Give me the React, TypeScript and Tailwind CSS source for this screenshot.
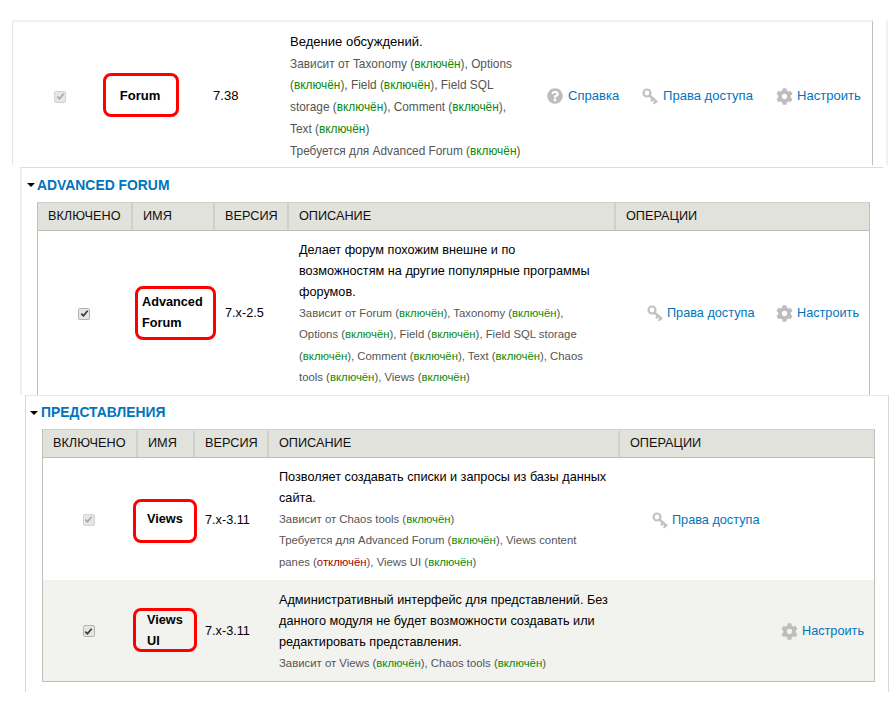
import React from "react";
import { FaCog, FaQuestionCircle } from "react-icons/fa";

const On = () => <span className="text-[#0a8a0a]">включён</span>;
const Off = () => <span className="text-[#a30000]">отключён</span>;

function KeyIcon() {
  return (
    <svg viewBox="0 0 17 17" className="w-[17px] h-[17px] shrink-0" fill="none">
      <circle cx="5" cy="5" r="3.5" stroke="#c2c2c2" strokeWidth="2.2" />
      <path d="M7.4 7.6l7.6 6.6" stroke="#c2c2c2" strokeWidth="2.6" />
      <path d="M11 11l-2 2.4M13.6 13.2l-1.8 2.6" stroke="#c2c2c2" strokeWidth="2.2" />
    </svg>
  );
}

function Check({ disabled }: { disabled?: boolean }) {
  return (
    <span
      className={
        disabled
          ? "flex w-3 h-3 rounded-[2px] border border-[#d2d2d2] bg-[#e6e6e6] items-center justify-center"
          : "flex w-3 h-3 rounded-[2px] border border-[#b4b4b4] bg-[#e4e4e4] items-center justify-center"
      }
    >
      <svg viewBox="0 0 10 10" className="w-[9px] h-[9px]" fill="none">
        <path d="M1.5 5.2l2.3 2.4L8.5 2" stroke={disabled ? "#a8a8a8" : "#333333"} strokeWidth="1.8" />
      </svg>
    </span>
  );
}

function Help() {
  return (
    <a className="flex items-center gap-[5px] text-[#0074bd]">
      <FaQuestionCircle className="w-4 h-4 text-[#bdbdbd] shrink-0" />
      Справка
    </a>
  );
}
function Perm({ wide }: { wide?: boolean }) {
  return (
    <a className={(wide ? "gap-[4px]" : "gap-[3px]") + " flex items-center text-[#0074bd] whitespace-nowrap"}>
      <KeyIcon />
      Права доступа
    </a>
  );
}
function Conf() {
  return (
    <a className="flex items-center gap-[4px] text-[#0074bd]">
      <FaCog className="w-[17px] h-[17px] text-[#bdbdbd] shrink-0" />
      Настроить
    </a>
  );
}

function Legend({ title, cls }: { title: string; cls: string }) {
  return (
    <div className={cls + " flex items-center"}>
      <span className="w-0 h-0 border-x-[4px] border-x-transparent border-t-[4px] border-t-black" />
      <span className="text-[#0074bd] font-bold text-[13.9px]">{title}</span>
    </div>
  );
}

function HeadCell({ label, last }: { label: string; last?: boolean }) {
  return (
    <div className={last ? "pl-[10px] flex items-center" : "pl-[10px] flex items-center border-r-2 border-r-[#cfd0ca]"}>
      {label}
    </div>
  );
}

function Head({ cols }: { cols: string }) {
  return (
    <div className={cols + " h-[28px] bg-[#e1e2dc] border-b border-[#bebfb9] text-[#111]"}>
      <HeadCell label="ВКЛЮЧЕНО" />
      <HeadCell label="ИМЯ" />
      <HeadCell label="ВЕРСИЯ" />
      <HeadCell label="ОПИСАНИЕ" />
      <HeadCell label="ОПЕРАЦИИ" last />
    </div>
  );
}

const cols2 = "grid grid-cols-[95px_82px_74px_327px_1fr]";
const cols3 = "grid grid-cols-[95px_57px_74px_351px_1fr] pt-[1px]";
const sm = "text-[11.35px] text-[#555] leading-[21.1px]";

export default function App() {
  return (
    <div
      className="w-[896px] h-[706px] bg-white overflow-hidden text-black"
      style={{ fontFamily: '"Liberation Sans", Arial, sans-serif' }}
    >
      {/* Forum row */}
      <div className="flex pt-[20px] pl-[12px] text-[13.05px]">
        <div className="w-[861px] h-[145px] border-l border-l-[#e6e6e0] border-t-2 border-t-[#f2f2ee] border-r border-r-[#bebfb9] grid grid-cols-[91px_100px_86px_247px_1fr] items-center">
          <div className="flex justify-end pr-[38px] mt-[6px]">
            <Check disabled />
          </div>
          <div className="ml-[-1px] w-[76px] h-[44px] mt-[3px] pt-[1px] pr-[2px] border-[3px] border-[#f00] rounded-[8px] flex items-center justify-center font-bold">
            Forum
          </div>
          <div className="pl-[9px] mt-[5px]">7.38</div>
          <div className="self-start pt-[9px] pr-[12px]">
            <div className="leading-[22px] h-[22px]">Ведение обсуждений.</div>
            <div className="text-[11.85px] text-[#555] leading-[21.9px] mt-[0.5px]">
              Зависит от Taxonomy (<On />), Options (<On />), Field (<On />), Field SQL storage (<On />), Comment (<On />), Text (<On />)
              <br />
              Требуется для Advanced Forum (<On />)
            </div>
          </div>
          <div className="flex pl-[10px] mt-[5px]">
            <div className="w-[95px]"><Help /></div>
            <div className="w-[134px]"><Perm wide /></div>
            <Conf />
          </div>
        </div>
        <div className="ml-[13px] w-[2px] h-[145px] bg-[#f2f2ee]" />
      </div>

      {/* Advanced Forum */}
      <div className="ml-[20px] mt-[2px] w-[863px] h-[228px] border-l-2 border-l-[#eeeeea] border-t border-t-[#dcdcd8] text-[12.7px]">
        <Legend title="ADVANCED FORUM" cls="h-[34px] pl-[5px] gap-[2px]" />
        <div className="ml-[15px] w-[833px] h-[193px] border-x border-t border-[#bebfb9] border-t-[#cfd0ca]">
          <Head cols={cols2} />
          <div className={cols2 + " items-center h-[165px]"}>
            <div className="flex justify-center pr-[3px]"><Check /></div>
            <div className="ml-[2px] w-[81px] h-[54px] mt-[-2px] border-[3px] border-[#f00] rounded-[8px] flex items-center pl-[4px] font-bold leading-[21px]">
              Advanced Forum
            </div>
            <div className="pl-[10px]">7.x-2.5</div>
            <div className="pl-[10px] pr-[22px] mt-[1px]">
              <div className="leading-[21px]">
                Делает форум похожим внешне и по возможностям на другие популярные программы форумов.
              </div>
              <div className={sm}>
                Зависит от Forum (<On />), Taxonomy (<On />), Options (<On />), Field (<On />), Field SQL storage (<On />), Comment (<On />), Text (<On />), Chaos tools (<On />), Views (<On />)
              </div>
            </div>
            <div className="flex pl-[31px]">
              <div className="w-[129px]"><Perm /></div>
              <Conf />
            </div>
          </div>
        </div>
      </div>

      {/* Views */}
      <div className="ml-[25px] w-[864px] h-[297px] border-x border-x-[#d8d8d4] border-t border-t-[#e8e8e4] text-[12.7px]">
        <Legend title="ПРЕДСТАВЛЕНИЯ" cls="h-[33px] pl-[4px] gap-[3px]" />
        <div className="ml-[16px] w-[833px] border border-[#bebfb9] border-t-[#cfd0ca]">
          <Head cols={cols3} />
          <div className={cols3 + " items-center h-[122px]"}>
            <div className="flex justify-center pr-[4px]"><Check disabled /></div>
            <div className="ml-[-5px] w-[64px] h-[44px] mt-[3px] border-[3px] border-[#f00] rounded-[8px] flex items-start pl-[11px] pt-[7px] font-bold leading-[21px]">
              Views
            </div>
            <div className="pl-[10px] mt-[2px]">7.x-3.11</div>
            <div className="pl-[10px] pr-[12px] mt-[1px]">
              <div className="leading-[21px]">Позволяет создавать списки и запросы из базы данных сайта.</div>
              <div className={sm}>
                Зависит от Chaos tools (<On />)
                <br />
                Требуется для Advanced Forum (<On />), Views content panes (<Off />), Views UI (<On />)
              </div>
            </div>
            <div className="pl-[32px] mt-[2px]"><Perm /></div>
          </div>
          <div className={cols3 + " items-center h-[101px] bg-[#f2f3ee]"}>
            <div className="flex justify-center pr-[4px]"><Check /></div>
            <div className="ml-[-5px] w-[64px] h-[44px] mt-[-3px] pt-[3px] border-[3px] border-[#f00] rounded-[8px] flex items-center pl-[11px] font-bold leading-[21px]">
              Views UI
            </div>
            <div className="pl-[10px] mt-[1px]">7.x-3.11</div>
            <div className="pl-[10px] mt-[2px]">
              <div className="leading-[21px]">
                Административный интерфейс для представлений. Без данного модуля не будет возможности создавать или редактировать представления.
              </div>
              <div className={sm}>
                Зависит от Views (<On />), Chaos tools (<On />)
              </div>
            </div>
            <div className="pl-[161px] mt-[1px]"><Conf /></div>
          </div>
        </div>
      </div>
    </div>
  );
}
